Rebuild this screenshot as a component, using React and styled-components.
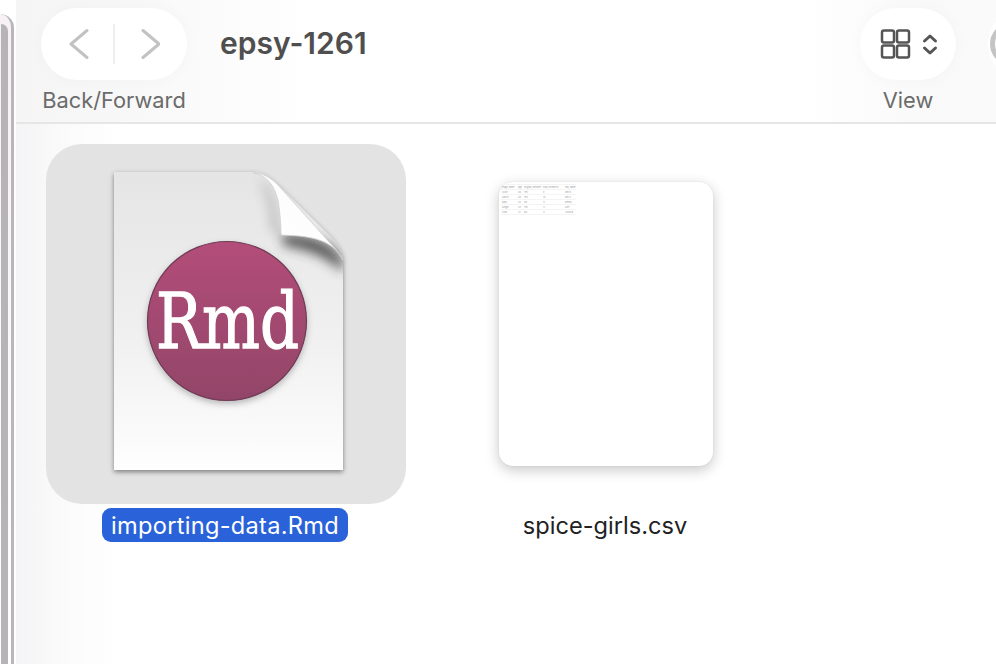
import styled, { createGlobalStyle } from 'styled-components'

const Global = createGlobalStyle`
  html, body { margin: 0; padding: 0; background: #fff; overflow: hidden; }
  body { font-family: Inter, "Liberation Sans", sans-serif; }
`

const Page = styled.div`
  display: flex;
  width: 996px;
  height: 664px;
  overflow: hidden;
  background: #fff;
`

const WindowEdge = styled.div`
  flex: none;
  width: 16px;
  height: 100%;
  background: #fff;
  overflow: hidden;
`

const EdgeOuter = styled.div`
  box-sizing: border-box;
  width: 14px;
  height: 100%;
  margin-top: 14px;
  background: linear-gradient(#f7f0f4, #fbf9fa 50%, #ffffff);
  border-right: 3px solid #bab7ba;
  border-top-right-radius: 14px;
  padding: 10px 0 0 1px;
`

const EdgeInner = styled.div`
  width: 7px;
  height: 100%;
  background: #b7b4b7;
  border-top-right-radius: 8px;
`

const Main = styled.div`
  flex: 1;
  min-width: 0;
  display: flex;
  flex-direction: column;
`

const Toolbar = styled.div`
  box-sizing: border-box;
  flex: none;
  height: 124px;
  display: flex;
  align-items: flex-start;
  padding: 8px 0 0 25px;
  border-bottom: 2px solid #e6e6e6;
  overflow: hidden;
  background: linear-gradient(to right, #f5f5f5 0, #f8f8f8 120px, #fff 300px, #fff 780px, #f9f9f9 920px, #fafafa 100%);
`

const ToolGroup = styled.div`
  flex: none;
  display: flex;
  flex-direction: column;
  align-items: center;
  gap: 6px;
`

const Pill = styled.div`
  box-sizing: border-box;
  width: ${p => p.$width}px;
  height: 72px;
  display: flex;
  align-items: center;
  justify-content: center;
  background: #fff;
  border-radius: 36px;
  box-shadow: 0 0 18px rgba(0, 0, 0, 0.025);
`

const ToolLabel = styled.div`
  font-size: 21.8px;
  line-height: 28px;
  color: #6b6b6b;
  white-space: nowrap;
`

const Divider = styled.div`
  width: 2px;
  height: 40px;
  margin: 0 25px 0 24px;
  background: #eeeeee;
`

const Title = styled.div`
  flex: 1;
  margin-left: 33px;
  height: 72px;
  line-height: 71px;
  font-size: 30px;
  font-weight: 600;
  color: #4f4f4f;
`

const AccountPill = styled.div`
  flex: none;
  box-sizing: border-box;
  width: 72px;
  height: 72px;
  margin-left: 32px;
  margin-right: -64px;
  padding: 14px 0 0 2px;
  background: #fff;
  border-radius: 36px;
`

const AccountRing = styled.div`
  box-sizing: border-box;
  width: 44px;
  height: 44px;
  border-radius: 50%;
  border: 5px solid #c4c4c4;
`

const Files = styled.div`
  flex: 1;
  display: flex;
  align-items: flex-start;
  gap: 20px;
  padding: 20px 0 0 30px;
  background: linear-gradient(to right, #f4f4f6 0, #f9f9fa 35px, #fdfdfd 75px, #fff 110px);
`

const FileCell = styled.div`
  flex: none;
  width: 360px;
  display: flex;
  flex-direction: column;
  align-items: center;
  gap: 4px;
`

const Tile = styled.div`
  width: 360px;
  height: 360px;
  display: flex;
  align-items: center;
  justify-content: center;
  border-radius: 36px;
  background: ${p => (p.$selected ? '#e3e3e3' : 'transparent')};
`

const DocSvg = styled.svg`
  display: block;
`

const FileName = styled.div`
  height: 34px;
  line-height: 35px;
  margin-right: 2px;
  padding: 0 9px;
  border-radius: 9px;
  font-size: 23.6px;
  letter-spacing: ${p => (p.$selected ? '0.28px' : '0')};
  white-space: nowrap;
  color: ${p => (p.$selected ? '#fff' : '#222')};
  background: ${p => (p.$selected ? '#2a62d9' : 'transparent')};
`

const Thumb = styled.div`
  box-sizing: border-box;
  width: 214px;
  height: 284px;
  padding: 2px;
  background: #fff;
  border-radius: 14px;
  box-shadow: 0 4px 14px rgba(0, 0, 0, 0.22), 0 0 2px rgba(0, 0, 0, 0.08);
`

const MiniTable = styled.div`
  width: 75px;
  display: grid;
  grid-template-columns: 16px 6px 19px 22px 12px;
  grid-auto-rows: 5px;
  font-size: 2.2px;
  line-height: 5px;
  color: #999;
  border-top: 1px solid #f4f4f4;
`

const MiniCell = styled.div`
  padding-left: 1px;
  white-space: nowrap;
  border-bottom: 1px solid #f4f4f4;
  box-sizing: border-box;
`

const rows = [
  ['stage_name', 'age', 'original_member', 'total_number1s', 'real_name'],
  ['Scary', '46', 'Yes', '9', 'Mel B'],
  ['Sporty', '46', 'Yes', '10', 'Mel C'],
  ['Baby', '45', 'No', '11', 'Emma'],
  ['Ginger', '49', 'Yes', '11', 'Geri'],
  ['Posh', '47', 'No', '11', 'Victoria'],
]

function RmdDoc() {
  return (
    <DocSvg width="360" height="360" viewBox="0 0 360 360">
      <defs>
        <linearGradient id="sheet" x1="0" y1="0" x2="0" y2="1">
          <stop offset="0" stopColor="#e5e5e5" />
          <stop offset="0.55" stopColor="#f0f0f0" />
          <stop offset="1" stopColor="#fefefe" />
        </linearGradient>
        <linearGradient id="flap" x1="0" y1="1" x2="1" y2="0">
          <stop offset="0" stopColor="#ffffff" />
          <stop offset="0.6" stopColor="#fdfdfd" />
          <stop offset="1" stopColor="#dcdcdc" />
        </linearGradient>
        <linearGradient id="badge" x1="0" y1="0" x2="0" y2="1">
          <stop offset="0" stopColor="#b34e79" />
          <stop offset="1" stopColor="#924568" />
        </linearGradient>
        <filter id="soft" x="-40%" y="-60%" width="180%" height="220%">
          <feGaussianBlur stdDeviation="6" />
        </filter>
        <filter id="dropShadow" x="-10%" y="-10%" width="120%" height="120%">
          <feDropShadow dx="0" dy="2" stdDeviation="2.5" floodColor="#000" floodOpacity="0.45" />
        </filter>
        <filter id="badgeShadow" x="-10%" y="-10%" width="120%" height="120%">
          <feDropShadow dx="0" dy="3" stdDeviation="3" floodColor="#000" floodOpacity="0.25" />
        </filter>
        <clipPath id="page">
          <path d="M68 28H207C216 28 224 33 232 41L284 92C292 100 297 108 297 116V326H68Z" />
        </clipPath>
      </defs>
      <path
        d="M68 28H207C216 28 224 33 232 41L284 92C292 100 297 108 297 116V326H68Z"
        fill="url(#sheet)"
        filter="url(#dropShadow)"
      />
      <g clipPath="url(#page)">
        <path d="M236 90C262 90 286 96 297 116V128C280 112 258 104 238 102Z" fill="#333" opacity="0.8" filter="url(#soft)" />
        <path d="M220 40C228 52 231 70 234 90L226 86C226 68 222 50 214 36Z" fill="#666" opacity="0.45" filter="url(#soft)" />
      </g>
      <path
        d="M207 29C220 31 228 40 232 56C234 68 235 80 235 91C262 92 286 94 297 116C292 108 288 103 284 99L232 41C224 33 216 29 207 29Z"
        fill="url(#flap)"
        stroke="#cfcfcf"
        strokeWidth="0.8"
      />
      <circle cx="181" cy="177" r="79.5" fill="url(#badge)" stroke="#6f3c56" strokeWidth="1.2" filter="url(#badgeShadow)" />
      <text
        x="110"
        y="204"
        fontFamily="DejaVu Serif, Liberation Serif, serif"
        fontSize="76"
        fill="#fff"
        stroke="#fff"
        strokeWidth="1.3"
        textLength="143"
        lengthAdjust="spacingAndGlyphs"
      >
        Rmd
      </text>
    </DocSvg>
  )
}

export default function App() {
  return (
    <Page>
      <Global />
      <WindowEdge>
        <EdgeOuter>
          <EdgeInner />
        </EdgeOuter>
      </WindowEdge>
      <Main>
        <Toolbar>
          <ToolGroup>
            <Pill $width={146}>
              <svg width="20" height="32" viewBox="0 0 20 32" fill="none" stroke="#c2c2c2" strokeWidth="3" strokeLinecap="round" strokeLinejoin="round">
                <path d="M18 2.5 2 16 18 29.5" />
              </svg>
              <Divider />
              <svg width="20" height="32" viewBox="0 0 20 32" fill="none" stroke="#c2c2c2" strokeWidth="3" strokeLinecap="round" strokeLinejoin="round">
                <path d="M3 2.5 19 16 3 29.5" />
              </svg>
            </Pill>
            <ToolLabel>Back/Forward</ToolLabel>
          </ToolGroup>
          <Title>epsy-1261</Title>
          <ToolGroup>
            <Pill $width={96}>
              <svg width="60" height="32" viewBox="0 0 60 32" fill="none" stroke="#555" strokeWidth="2.5" strokeLinecap="round" strokeLinejoin="round">
                <rect x="4" y="2.5" width="12" height="12" rx="2" />
                <rect x="19" y="2.5" width="12" height="12" rx="2" />
                <rect x="4" y="17.5" width="12" height="12" rx="2" />
                <rect x="19" y="17.5" width="12" height="12" rx="2" />
                <path d="M46.5 13 52 8 57.5 13" strokeWidth="3" />
                <path d="M46.5 20 52 25 57.5 20" strokeWidth="3" />
              </svg>
            </Pill>
            <ToolLabel>View</ToolLabel>
          </ToolGroup>
          <AccountPill>
            <AccountRing />
          </AccountPill>
        </Toolbar>
        <Files>
          <FileCell>
            <Tile $selected>
              <RmdDoc />
            </Tile>
            <FileName $selected>importing-data.Rmd</FileName>
          </FileCell>
          <FileCell>
            <Tile>
              <Thumb>
                <MiniTable>
                  {rows.flat().map((cell, i) => (
                    <MiniCell key={i}>{cell}</MiniCell>
                  ))}
                </MiniTable>
              </Thumb>
            </Tile>
            <FileName>spice-girls.csv</FileName>
          </FileCell>
        </Files>
      </Main>
    </Page>
  )
}
